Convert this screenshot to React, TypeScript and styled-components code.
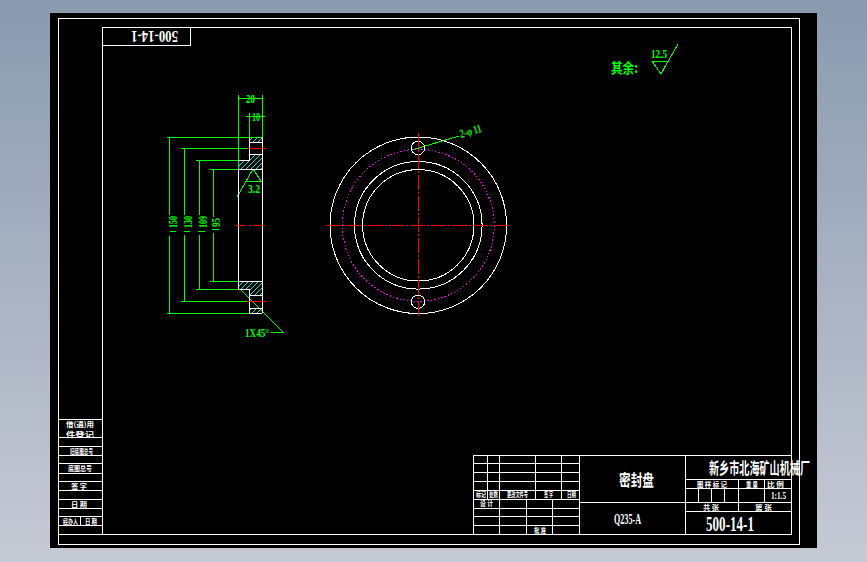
import React from "react";
import styled, { createGlobalStyle } from "styled-components";

const Global = createGlobalStyle`
  html, body { margin: 0; height: 100%; overflow: hidden; }
  #root { height: 100%; }
`;

const Page = styled.div`
  height: 100%;
  box-sizing: border-box;
  padding: 13px 50px 14px;
  display: flex;
  background: linear-gradient(180deg, #8a9aaf 0%, #c6cad5 100%);
`;

const Viewport = styled.main`
  flex: 1;
  display: flex;
  background: #000;
`;

const Drawing = styled.svg`
  display: block;
  width: 767px;
  height: 535px;
`;

const Stroke = styled.path<{ $c?: string; $dash?: string }>`
  fill: none;
  stroke: ${(p) => p.$c || "#fff"};
  stroke-width: 1;
  stroke-dasharray: ${(p) => p.$dash || "none"};
  shape-rendering: crispEdges;
`;

const Round = styled.circle<{ $c?: string; $dash?: string }>`
  fill: none;
  stroke: ${(p) => p.$c || "#fff"};
  stroke-width: 1;
  stroke-dasharray: ${(p) => p.$dash || "none"};
  shape-rendering: crispEdges;
`;

const Hatch = styled.path`
  fill: url(#hatch);
  stroke: none;
`;

const Label = styled.text<{ $c?: string; $s?: number; $serif?: boolean }>`
  fill: ${(p) => p.$c || "#fff"};
  font-family: ${(p) => (p.$serif ? '"Liberation Serif"' : '"Noto Sans CJK SC"')}, "Noto Sans CJK SC", sans-serif;
  font-size: ${(p) => p.$s || 8}px;
  font-weight: 700;
  text-anchor: start;
  dominant-baseline: alphabetic;
`;

type T = [string, number, number, number, number?];

const GREEN = "#00ff00";
const RED = "#ff0000";
const CYAN = "#00ffff";
const MAGENTA = "#ff00ff";

const frame = [
  "M58 18H799V544H58Z",
  "M102 27H791V534H102Z",
  "M102 45H190V27",
  "M58 419H102M58 437H102M58 446H102M58 455H102M58 463H102M58 473H102M58 481H102M58 490H102M58 499H102M58 508H102M58 516H102M58 525H102M58 534H102M80 516V525",
  "M473 534V455H791M473 463H579M473 472H579M473 481H579M473 490H579M473 499H579M473 508H579M473 516H579M473 525H579",
  "M487 455V499M499 455V534M535 455V499M561 455V499M526 499V534M552 499V534M579 455V534M579 502H791M685 455V534",
  "M685 479H791M685 488H791M685 511H791M738 479V511M764 479V502M698 488V502M711 488V502M724 488V502",
];

const whiteText: T[] = [
  ["新乡市北海矿山机械厂", 709, 474, 101, 16],
  ["密封盘", 619, 486, 35, 16],
  ["图 样 标 记", 697, 487, 30, 7],
  ["重 量", 746, 487, 12, 7],
  ["比 例", 767, 487, 17, 7],
  ["共 张", 703, 510, 16, 7],
  ["第 张", 755, 510, 17, 7],
  ["标记", 476, 497, 10, 7],
  ["处数", 489, 497, 9, 7],
  ["更改文件号", 507, 497, 21, 7],
  ["签 字", 544, 497, 9, 7],
  ["日期", 567, 497, 9, 7],
  ["设 计", 480, 506, 13, 7],
  ["批 准", 534, 533, 12, 7],
  ["借(通)用", 66, 427, 28, 7],
  ["件登记", 66, 437, 28, 7],
  ["旧底图总号", 70, 454, 23, 7],
  ["底图总号", 68, 471, 24, 7],
  ["签 字", 71, 489, 16, 7],
  ["日 期", 71, 507, 16, 7],
  ["经办人", 63, 524, 15, 7],
  ["日 期", 85, 524, 12, 7],
];

const serifText: T[] = [
  ["500-14-1", 706, 531, 48, 20],
  ["Q235-A", 614, 524, 27, 14],
  ["1:1.5", 771, 499, 15, 11],
];

const dimLines = [
  "M238 95V169M262 95V137M238 98H262",
  "M246 116H265M249 113V137",
  "M167 137H262M181 148H247M196 160H238M210 169H238",
  "M210 281H238M196 289H238M181 301H247M167 313H262",
  "M169 137V215M169 236V313M184 148V215M184 235V301M199 160V215M199 235V289M213 169V217M213 233V281",
  "M170 231H176M184 231H190M198 231H205M212 229H219",
  "M237 197L253 169L261 181H246",
  "M240 289L283 332H271",
  "M652 61H668L661 74L652 61M661 74L678 44",
  "M412 150L459 136",
];

const outline = [
  "M238 169V289M262 137V313M249 137V160H238H249M249 142H262M249 154H262M238 169H262",
  "M238 281H262M238 289H249V313H262M249 295H262M249 308H262",
];

const App = () => (
  <>
    <Global />
    <Page>
      <Viewport>
        <Drawing viewBox="50 13 767 535" xmlns="http://www.w3.org/2000/svg">
          <defs>
            <pattern id="hatch" width="5" height="5" patternUnits="userSpaceOnUse" patternTransform="translate(238 137)">
              <path d="M0 5L5 0" stroke={CYAN} strokeWidth="0.9" fill="none" />
            </pattern>
          </defs>

          {frame.map((d) => (
            <Stroke key={d} d={d} />
          ))}
          <Label $s={17} $serif textLength={47} lengthAdjust="spacingAndGlyphs" x={-178} y={-31} transform="rotate(180)">
            500-14-1
          </Label>

          {whiteText.map(([t, x, y, w, s]) => (
            <Label key={t + x + y} x={x} y={y} $s={s} textLength={w} lengthAdjust="spacingAndGlyphs">
              {t}
            </Label>
          ))}
          {serifText.map(([t, x, y, w, s]) => (
            <Label key={t} x={x} y={y} $s={s} $serif textLength={w} lengthAdjust="spacingAndGlyphs">
              {t}
            </Label>
          ))}

          <Hatch d="M249 137H262V142H249ZM249 154H262V169H238V160H249ZM238 281H262V295H249V289H238ZM249 308H262V313H249Z" />
          {dimLines.map((d) => (
            <Stroke key={d} d={d} $c={GREEN} />
          ))}
          {outline.map((d) => (
            <Stroke key={d} d={d} />
          ))}
          <Stroke d="M247 148H266M247 301H266" $c={RED} />
          <Stroke d="M235 225H246M249 225H251M253 225H265" $c={RED} />

          <Label $c={GREEN} $s={13} $serif x={246} y={103} textLength={9} lengthAdjust="spacingAndGlyphs">20</Label>
          <Label $c={GREEN} $s={13} $serif x={252} y={121} textLength={8} lengthAdjust="spacingAndGlyphs">10</Label>
          <Label $c={GREEN} $s={12} $serif x={248} y={193} textLength={12} lengthAdjust="spacingAndGlyphs">3.2</Label>
          <Label $c={GREEN} $s={13} $serif x={245} y={337} textLength={24} lengthAdjust="spacingAndGlyphs">1X45°</Label>
          {[
            ["150", 177, 228, 12],
            ["130", 192, 228, 12],
            ["109", 207, 228, 12],
            ["95", 220, 227, 9],
          ].map(([t, x, y, w]) => (
            <Label
              key={t as string}
              $c={GREEN}
              $s={12}
              $serif
              x={x as number}
              y={y as number}
              textLength={w as number}
              lengthAdjust="spacingAndGlyphs"
              transform={`rotate(-90 ${x} ${y})`}
            >
              {t}
            </Label>
          ))}

          <Round cx={418.3} cy={225.3} r={88.3} />
          <Round cx={418.3} cy={225.3} r={63.8} />
          <Round cx={418.3} cy={225.3} r={55.7} />
          <Round cx={418.3} cy={225.3} r={76} $c={MAGENTA} $dash="1.5 2" />
          <Round cx={418} cy={148} r={6.7} />
          <Round cx={418} cy={301.7} r={6.7} />
          <Stroke d="M326 225.5H510" $c={RED} $dash="15 2 2 2" />
          <Stroke d="M418.5 133V317" $c={RED} $dash="15 2 2 2" />
          <Label $c={GREEN} $s={12} $serif x={461} y={138} textLength={22} lengthAdjust="spacingAndGlyphs" transform="rotate(-16 461 138)">
            2-φ 11
          </Label>

          <Label $c={GREEN} $s={14} x={611} y={73} textLength={27} lengthAdjust="spacingAndGlyphs">其余:</Label>
          <Label $c={GREEN} $s={13} $serif x={651} y={58} textLength={16} lengthAdjust="spacingAndGlyphs">12.5</Label>
        </Drawing>
      </Viewport>
    </Page>
  </>
);

export default App;
